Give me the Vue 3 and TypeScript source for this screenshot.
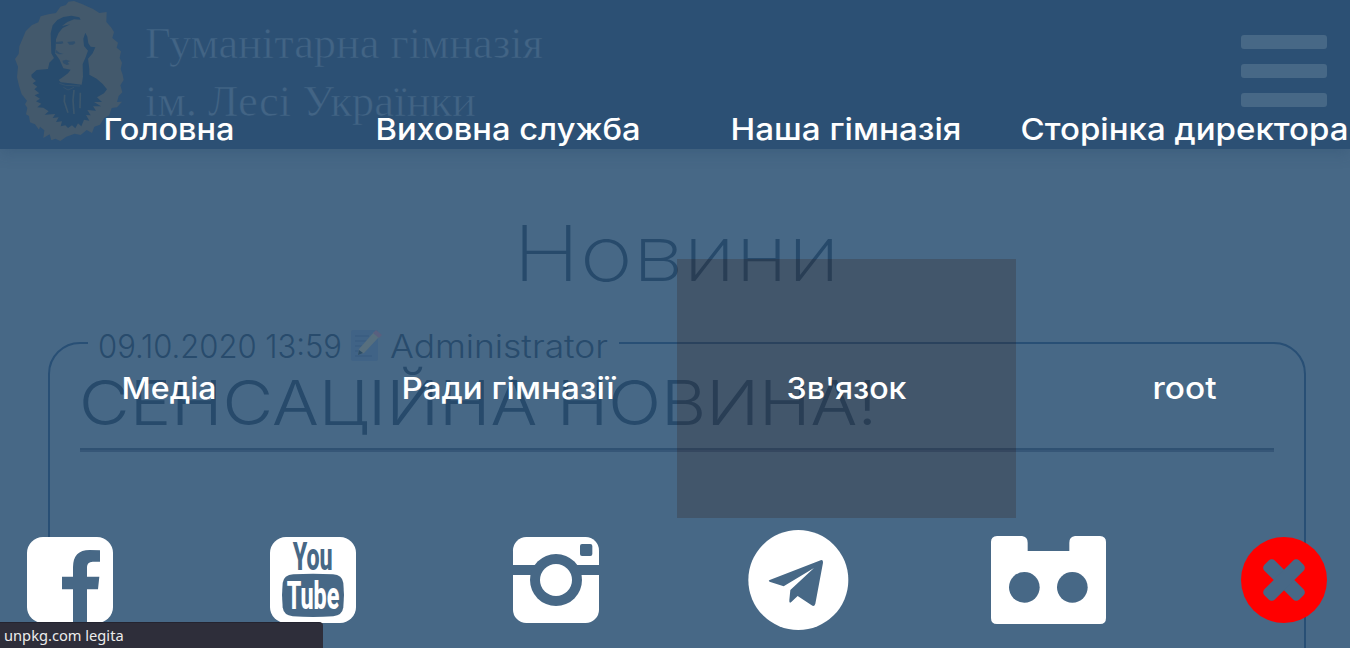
<script setup lang="ts">
interface NavItem { label: string; width: number; active?: boolean }

const nav: NavItem[] = [
  { label: 'Головна', width: 131 },
  { label: 'Виховна служба', width: 265 },
  { label: 'Наша гімназія', width: 231 },
  { label: 'Сторінка директора', width: 328 },
  { label: 'Медіа', width: 95 },
  { label: 'Ради гімназії', width: 213 },
  { label: "Зв'язок", width: 120, active: true },
  { label: 'root', width: 64 },
]
</script>

<template>
  <div class="screen">
    <header class="header">
      <svg class="portrait" viewBox="0 0 375 435">
        <path class="blob" d="M222 3L246 12L264 20L278 26L298 39L320 36L319 66L333 82L342 96L337 114L354 128L350 143L363 154L359 174L366 188L362 207L368 224L371 240L361 256L367 277L356 288L351 306L366 305L351 322L335 324L328 345L312 355L300 374L283 380L276 399L260 390L242 405L224 401L199 410L181 423L166 416L154 421L149 403L130 414L133 391L120 380L117 389L105 373L90 367L87 348L78 343L82 324L75 313L81 302L65 283L57 257L51 232L54 200L45 177L56 162L58 139L67 118L77 94L96 75L115 67L122 49L145 43L168 39L181 20L198 15L205 5Z" />
        <path class="figure" d="M153 128L152 100L158 76L172 60L190 51L214 47L238 52L242 59L222 58L202 66L186 78L211 73L188 84L176 98L168 118L167 145L165 160L178 178L190 205L212 209L204 220L190 230L176 240L182 247L210 250L245 254L249 230L248 192L256 174L264 152L252 138L250 116L256 98L262 110L265 130L272 140L286 142L278 160L264 176L268 207L268 224L290 236L308 252L321 268L312 280L291 292L306 306L282 306L303 319L279 319L288 332L262 330L272 346L258 345L268 362L252 359L244 379L234 370L226 385L216 376L204 384L196 376L182 379L186 364L168 366L176 352L158 354L166 342L134 344L146 334L130 323L112 322L124 311L108 304L120 296L104 286L118 280L103 268L112 260L98 250L108 243L95 232L94 224L110 210L144 207L148 188L162 174L154 160Z" />
        <path class="feature" d="M168 126L188 124L190 130L182 132L168 132ZM202 126L224 124L226 129L219 134L208 134ZM168 150L178 158L190 162L178 163L166 158ZM187 182L198 179L211 183L203 187L208 193L200 195L190 190Z" />
        <path class="crease" d="M178 250L196 256L240 258M190 262L204 270L222 262" />
        <path class="crease thick" d="M194 284L193 305L204 338M222 270L219 300L222 342M241 278L240 325" />
      </svg>
      <svg class="school" viewBox="0 0 420 149">
        <text x="0" y="58" textLength="398" lengthAdjust="spacingAndGlyphs">Гуманітарна гімназія</text>
        <text x="0" y="116" textLength="331" lengthAdjust="spacingAndGlyphs">ім. Лесі Українки</text>
      </svg>
      <div class="burger"><i></i><i></i><i></i></div>
    </header>

    <main class="page">
      <svg class="title" viewBox="0 0 330 90">
        <text x="-5" y="72" textLength="327" lengthAdjust="spacingAndGlyphs">Новини</text>
      </svg>
      <fieldset class="news">
        <legend>
          <svg class="meta" viewBox="0 0 511 36">
            <text x="0" y="33" textLength="244" lengthAdjust="spacingAndGlyphs">09.10.2020 13:59</text>
            <rect x="253" y="5" width="27" height="31" rx="2" fill="#406386" />
            <path d="M257 11h14M257 16h12M257 21h8M257 26h5M257 31h17" stroke="#365b7e" stroke-width="1.2" />
            <path d="M276 7l5 5-15 16-6 2 1-6z" fill="#576f7e" />
            <path d="M260 30l1-5 4 3z" fill="#2b4d68" />
            <path d="M275 8l3-3 6 5-3 3z" fill="#59607f" />
            <text x="292" y="33" textLength="218" lengthAdjust="spacingAndGlyphs">Administrator</text>
          </svg>
        </legend>
        <svg class="headline" viewBox="0 0 820 84">
          <text x="-1" y="62" textLength="798" lengthAdjust="spacingAndGlyphs">СЕНСАЦІЙНА НОВИНА!</text>
        </svg>
        <hr />
      </fieldset>
    </main>

    <div class="menu">
      <nav class="links">
        <a v-for="item in nav" :key="item.label" :class="{ active: item.active }">
          <svg :width="item.width" height="42">
            <text x="-0.5" y="30.5" :textLength="item.width" lengthAdjust="spacingAndGlyphs">{{ item.label }}</text>
          </svg>
        </a>
      </nav>
      <div class="socials">
        <a>
          <svg width="86" height="86" viewBox="0 0 258 258">
            <rect width="258" height="258" rx="48" />
            <path class="cut" d="M138 258V157H105V119H138V91Q138 39 188 39L219 40V74H197Q180 75 180 90V119H217L213 157H180V258Z" />
          </svg>
        </a>
        <a>
          <svg width="86" height="86" viewBox="0 0 258 258">
            <rect width="258" height="258" rx="48" />
            <path class="cut" d="M70 112Q129 108 189 112Q217 114 220 138Q224 174 220 211Q217 235 190 238Q129 242 68 238Q41 235 38 211Q34 174 38 138Q41 114 70 112Z" />
            <text class="cut tube" x="68" y="99" textLength="120" lengthAdjust="spacingAndGlyphs">You</text>
            <text class="tube" x="50" y="215" textLength="158" lengthAdjust="spacingAndGlyphs">Tube</text>
          </svg>
        </a>
        <a>
          <svg width="86" height="86" viewBox="0 0 258 258">
            <rect width="258" height="258" rx="40" />
            <rect class="cut" y="84" width="258" height="30" />
            <circle class="cut" cx="129" cy="129" r="78" />
            <circle cx="129" cy="129" r="48" />
            <rect class="cut" x="201" y="21" width="37" height="36" rx="6" />
          </svg>
        </a>
        <a>
          <svg width="100" height="100" viewBox="0 0 300 300">
            <circle cx="151" cy="150" r="150" />
            <path class="cut" d="M65 150L218 91Q226 88 225 98L202 221Q199 231 191 226L149 198L129 217Q123 221 124 210L127 180L198 114L107 169L67 156Q59 153 65 150Z" />
          </svg>
        </a>
        <a class="wide">
          <svg width="115" height="88" viewBox="0 0 345 264">
            <path d="M18 0H93Q110 2 110 20V45H235V20Q235 2 252 0H327Q345 1 345 18V246Q345 264 327 264H18Q0 264 0 246V18Q0 1 18 0Z" />
            <circle class="cut" cx="100" cy="154" r="46" />
            <circle class="cut" cx="244" cy="154" r="46" />
          </svg>
        </a>
        <a class="close">
          <svg width="86" height="86" viewBox="0 0 258 258">
            <circle cx="129" cy="129" r="129" />
            <g class="cut" transform="rotate(45 129 129)">
              <rect x="55" y="107" width="148" height="44" rx="13" />
              <rect x="107" y="55" width="44" height="148" rx="13" />
            </g>
          </svg>
        </a>
      </div>
    </div>

    <div class="status">unpkg.com legita</div>
  </div>
</template>

<style>
html, body { margin: 0; background: #476886; }
</style>

<style scoped>
.screen { position: relative; width: 1350px; height: 648px; overflow: hidden; background: #476886; font-family: Inter, "Noto Sans", sans-serif; }
svg { display: block; flex: none; overflow: visible; }
.header { display: flex; align-items: flex-start; box-sizing: border-box; height: 149px; background: #2c5074; box-shadow: 0 4px 14px rgba(40, 72, 105, .3); }
.portrait { width: 125px; height: 145px; }
.blob { fill: #43596c; }
.figure { fill: #274b6d; }
.feature { fill: #2f4f6d; }
.crease { fill: none; stroke: #35536d; stroke-width: 3; }
.thick { stroke: #3c576d; stroke-width: 5; }
.school { width: 420px; height: 149px; margin-left: 20px; font: 44px "Liberation Serif", serif; fill: #426485; stroke: #2c5074; stroke-width: .6px; }
.burger { display: flex; flex-direction: column; gap: 15px; margin: 35px 23px 0 auto; }
.burger i { width: 86px; height: 14px; border-radius: 3px; background: #476886; }
.page { padding: 60px 44px 0 48px; }
.title { width: 330px; height: 90px; margin: 0 auto 0 470px; font-size: 77px; font-weight: 250; fill: #274a6b; }
.news { box-sizing: border-box; height: 420px; margin: 26px 0 0; padding: 0 30px; border: 2px solid #284f75; border-radius: 32px; min-width: 0; }
legend { margin-left: 8px; padding: 0 10px; }
.meta { width: 511px; height: 36px; font-size: 32px; font-weight: 270; fill: #284b6c; }
.headline { width: 820px; height: 87px; font-size: 62px; font-weight: 290; fill: #274a6b; }
hr { height: 2px; margin: 0; border: 0; border-top: 2px solid #2f5172; background: #365677; }
.menu { position: absolute; inset: 0; }
.links { display: grid; grid-template-columns: repeat(4, 338.7px); grid-template-rows: 259px 259px; }
.links a { display: flex; align-items: center; justify-content: center; font-size: 30px; font-weight: 540; fill: #fff; }
.active { background: rgba(50, 17, 0, .2); }
.socials { display: flex; justify-content: space-between; padding: 12px 16px 0 20px; fill: #fff; }
.socials a { display: flex; align-items: center; justify-content: center; width: 100px; height: 100px; }
.socials .wide { justify-content: flex-start; }
.socials .close { fill: #f00; }
.cut { fill: #476886; }
.tube { font: 800 116px Roboto, sans-serif; }
.status { position: absolute; left: 0; bottom: 0; box-sizing: border-box; width: 323px; height: 26px; padding-left: 4px; border-top: 1px solid #242430; border-radius: 0 4px 0 0; background: #2e2e3a; color: #ececec; font: 14.67px/24px "Noto Sans", sans-serif; }
</style>
